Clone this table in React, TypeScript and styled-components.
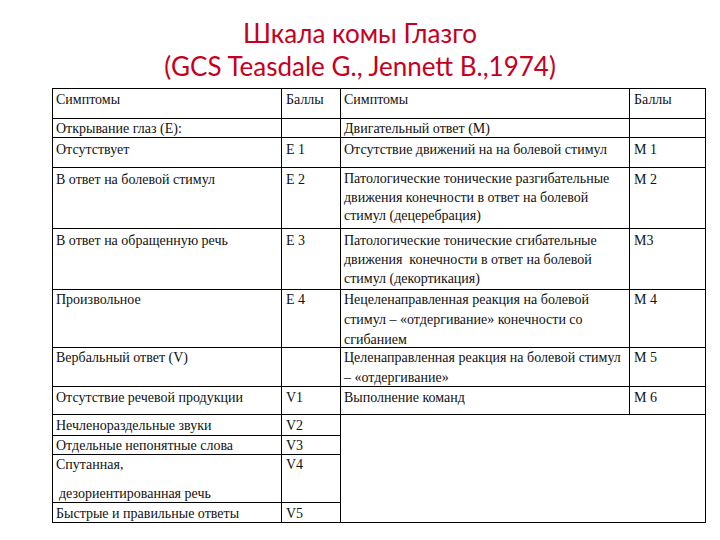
import React from "react";
import styled, { createGlobalStyle } from "styled-components";

const Global = createGlobalStyle`
  html, body { margin: 0; padding: 0; background: #fff; }
  body { width: 720px; height: 540px; overflow: hidden; }
`;

const Page = styled.div`
  width: 720px;
  height: 540px;
  display: flex;
  flex-direction: column;
  align-items: stretch;
`;

const Title = styled.h1`
  margin: 0;
  padding-top: 17px;
  height: 88px;
  box-sizing: border-box;
  text-align: center;
  font-family: Lato, "Open Sans", sans-serif;
  font-weight: 400;
  font-size: 26px;
  line-height: 33px;
  color: #c6001e;
`;

const Table = styled.div`
  margin-left: 52px;
  width: 654px;
  display: grid;
  grid-template-columns: 288px 366px;
  border-top: 1px solid #000;
  box-sizing: border-box;
  font-family: "Liberation Serif", "Times New Roman", "DejaVu Serif", serif;
  font-size: 14px;
  line-height: 19px;
  color: #111;
`;

const Half = styled.div<{ $last?: boolean; $cols: string }>`
  display: flex;
  flex-direction: column;
  border-left: 1px solid #000;
  border-right: ${(p) => (p.$last ? "1px solid #000" : "none")};
  box-sizing: border-box;
  --cols: ${(p) => p.$cols};
`;

const Row = styled.div<{ $h: number }>`
  display: grid;
  grid-template-columns: var(--cols);
  height: ${(p) => p.$h}px;
  border-bottom: 1px solid #000;
  box-sizing: border-box;
`;

const Cell = styled.div<{ $pt?: number; $score?: boolean; $lh?: number }>`
  padding: ${(p) => p.$pt ?? 1}px 2px 0 ${(p) => (p.$score ? 4 : 3)}px;
  border-right: ${(p) => (p.$score ? "none" : "1px solid #000")};
  box-sizing: border-box;
  white-space: pre;
  line-height: ${(p) => p.$lh ?? 19}px;
`;

const EmptyCell = styled.div`
  grid-column: 1 / -1;
`;

const Gap = styled.span`
  display: block;
  margin-top: 10px;
  padding-left: 3px;
`;

type R = { s: React.ReactNode; b: string; h: number; pt?: number; lh?: number; empty?: boolean };

const left: R[] = [
  { s: "Симптомы", b: "Баллы", h: 30, pt: 1 },
  { s: "Открывание глаз (E):", b: "", h: 19, pt: 0 },
  { s: "Отсутствует", b: "E 1", h: 30, pt: 2 },
  { s: "В ответ на болевой стимул", b: "E 2", h: 61, pt: 2 },
  { s: "В ответ на обращенную речь", b: "E 3", h: 61, pt: 2 },
  { s: "Произвольное", b: "E 4", h: 58, pt: 0 },
  { s: "Вербальный ответ (V)", b: "", h: 39, pt: 0 },
  { s: "Отсутствие речевой продукции", b: "V1", h: 28, pt: 1 },
  { s: "Нечленораздельные звуки", b: "V2", h: 21, pt: 1 },
  { s: "Отдельные непонятные слова", b: "V3", h: 19, pt: 0 },
  {
    s: (
      <>
        Спутанная,
        <Gap>дезориентированная речь</Gap>
      </>
    ),
    b: "V4",
    h: 48,
    pt: 0,
  },
  { s: "Быстрые и правильные ответы", b: "V5", h: 20, pt: 1 },
];

const right: R[] = [
  { s: "Симптомы", b: "Баллы", h: 30, pt: 1 },
  { s: "Двигательный ответ (M)", b: "", h: 19, pt: 0 },
  { s: "Отсутствие движений на на болевой стимул", b: "M 1", h: 30, pt: 2 },
  {
    s: "Патологические тонические разгибательные\nдвижения конечности в ответ на болевой\nстимул (децеребрация)",
    b: "M 2",
    h: 61,
    pt: 2,
    lh: 18.5,
  },
  {
    s: "Патологические тонические сгибательные\nдвижения  конечности в ответ на болевой\nстимул (декортикация)",
    b: "M3",
    h: 61,
    pt: 2,
  },
  {
    s: "Нецеленаправленная реакция на болевой\nстимул – «отдергивание» конечности со\nсгибанием",
    b: "M 4",
    h: 58,
    pt: 0,
    lh: 20,
  },
  {
    s: "Целенаправленная реакция на болевой стимул\n– «отдергивание»",
    b: "M 5",
    h: 39,
    pt: 0,
    lh: 20,
  },
  { s: "Выполнение команд", b: "M 6", h: 28, pt: 1 },
  { s: "", b: "", h: 108, empty: true },
];

function Side({ rows, cols, last }: { rows: R[]; cols: string; last?: boolean }) {
  return (
    <Half $cols={cols} $last={last}>
      {rows.map((r, i) => (
        <Row key={i} $h={r.h}>
          {r.empty ? (
            <EmptyCell />
          ) : (
            <>
              <Cell $pt={r.pt} $lh={r.lh}>
                {r.s}
              </Cell>
              <Cell $pt={r.pt} $score>
                {r.b}
              </Cell>
            </>
          )}
        </Row>
      ))}
    </Half>
  );
}

export default function App() {
  return (
    <Page>
      <Global />
      <Title>
        Шкала комы Глазго
        <br />
        (GCS Teasdale G., Jennett B.,1974)
      </Title>
      <Table>
        <Side rows={left} cols="229px 1fr" />
        <Side rows={right} cols="289px 1fr" last />
      </Table>
    </Page>
  );
}
